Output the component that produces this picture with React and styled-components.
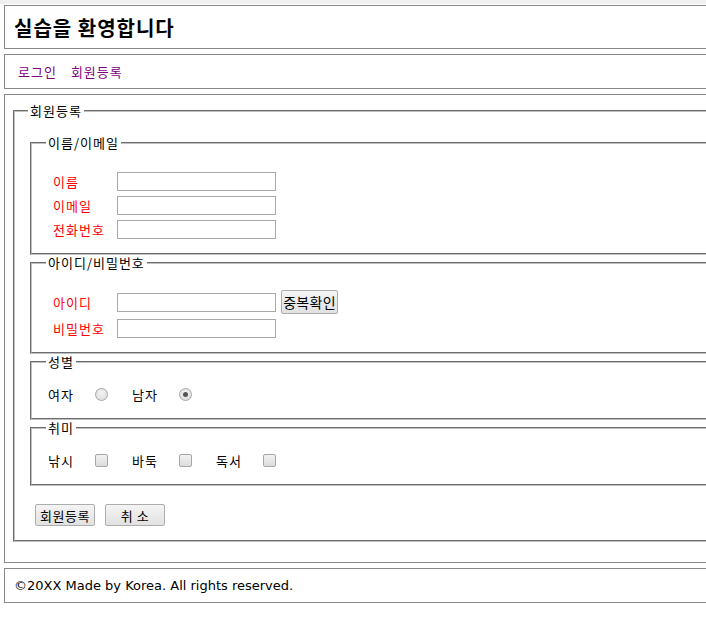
import React from "react";
import styled, { createGlobalStyle } from "styled-components";

const GlobalStyle = createGlobalStyle`
	html, body {
		margin: 0;
		padding: 0;
		background: #ffffff;
		overflow: hidden;
	}
	body {
		font-family: "Noto Sans CJK KR", "Noto Sans", sans-serif;
		font-size: 13px;
		letter-spacing: 1px;
		color: #000000;
	}
`;

const TopStrip = styled.div`
	height: 4px;
	background: #f0f0f0;
`;

const Page = styled.div`
	display: flex;
	flex-direction: column;
	gap: 5px;
	padding: 1px 0 0 4px;
`;

const Box = styled.div`
	width: 760px;
	border: 1px solid #888888;
	box-sizing: border-box;
`;

const Header = styled(Box)`
	height: 44px;
	display: flex;
	align-items: center;
	padding-left: 9px;
`;

const Title = styled.h1`
	margin: 0;
	font-size: 20px;
	font-weight: bold;
	letter-spacing: 1px;
`;

const Nav = styled(Box)`
	height: 35px;
	display: flex;
	align-items: center;
	gap: 14px;
	padding-left: 13px;
`;

const NavLink = styled.a`
	color: #800080;
	text-decoration: none;
	font-size: 13px;
	cursor: pointer;
`;

const Main = styled(Box)`
	padding: 8px 0 20px 8px;
`;

const Fieldset = styled.fieldset`
	margin: 0;
	border: 2px groove #c0c0c0;
	min-width: 0;
`;

const OuterSet = styled(Fieldset)`
	padding: 16px 0 14px 13px;
`;

const Group = styled(Fieldset)`
	margin: 0 2px;
	padding: ${(p) => p.$top}px 0 14px 14px;
`;

const Legend = styled.legend`
	padding: 0 2px;
	font-size: 13px;
	line-height: 16px;
`;

const Rows = styled.div`
	display: flex;
	flex-direction: column;
	gap: 5px;
	margin-left: 7px;
`;

const Row = styled.div`
	display: flex;
	align-items: center;
	min-height: 19px;
`;

const Label = styled.span`
	width: 64px;
	color: #ff0000;
	font-size: 13px;
`;

const TextInput = styled.input`
	width: 159px;
	height: 19px;
	box-sizing: border-box;
	border: 1px solid #a9a9a9;
	padding: 0 2px;
	margin: 0;
	font-size: 13px;
	outline: none;
`;

const Button = styled.button`
	box-sizing: border-box;
	width: ${(p) => p.$w}px;
	height: ${(p) => p.$h}px;
	margin: 0;
	padding: 0;
	border: 1px solid #adadad;
	border-radius: 2px;
	background: linear-gradient(#f4f4f4, #e1e1e1);
	font-family: "Noto Sans CJK KR", sans-serif;
	font-size: ${(p) => p.$size}px;
	letter-spacing: 0.5px;
	white-space: nowrap;
	color: #000000;
`;

const CheckButton = styled(Button)`
	margin-left: 5px;
	letter-spacing: 0.3px;
`;

const Options = styled.div`
	display: flex;
	align-items: center;
	height: 19px;
	margin-left: 2px;
`;

const Option = styled.label`
	display: flex;
	align-items: center;
	margin-right: 24px;
`;

const OptionText = styled.span`
	width: 47px;
	font-size: 13px;
`;

const Radio = styled.input.attrs({ type: "radio" })`
	appearance: none;
	width: 13px;
	height: 13px;
	margin: 0;
	border: 1px solid #a6a6a6;
	border-radius: 50%;
	box-sizing: border-box;
	background: radial-gradient(circle at 50% 40%, #f4f4f4, #d8d8d8);
	position: relative;

	&:checked::after {
		content: "";
		position: absolute;
		left: 3px;
		top: 3px;
		width: 5px;
		height: 5px;
		border-radius: 50%;
		background: #555555;
	}
`;

const Checkbox = styled.input.attrs({ type: "checkbox" })`
	appearance: none;
	width: 13px;
	height: 13px;
	margin: 0;
	border: 1px solid #a6a6a6;
	border-radius: 2px;
	box-sizing: border-box;
	background: linear-gradient(#f2f2f2, #dcdcdc);
`;

const Actions = styled.div`
	display: flex;
	gap: 10px;
	margin: 18px 0 0 7px;
`;

const Footer = styled(Box)`
	height: 35px;
	display: flex;
	align-items: center;
	padding-left: 9px;
	font-family: "DejaVu Sans", sans-serif;
	font-size: 13px;
	letter-spacing: 0;
`;

const nameFields = ["이름", "이메일", "전화번호"];
const hobbies = ["낚시", "바둑", "독서"];

export default function App() {
	return (
		<>
			<GlobalStyle />
			<TopStrip />
			<Page>
				<Header>
					<Title>실습을 환영합니다</Title>
				</Header>
				<Nav>
					<NavLink>로그인</NavLink>
					<NavLink>회원등록</NavLink>
				</Nav>
				<Main>
					<OuterSet>
						<Legend>회원등록</Legend>
						<Group $top={21}>
							<Legend>이름/이메일</Legend>
							<Rows>
								{nameFields.map((f) => (
									<Row key={f}>
										<Label>{f}</Label>
										<TextInput />
									</Row>
								))}
							</Rows>
						</Group>
						<Group $top={19}>
							<Legend>아이디/비밀번호</Legend>
							<Rows>
								<Row>
									<Label>아이디</Label>
									<TextInput />
									<CheckButton $w={57} $h={24} $size={14}>
										중복확인
									</CheckButton>
								</Row>
								<Row>
									<Label>비밀번호</Label>
									<TextInput type="password" />
								</Row>
							</Rows>
						</Group>
						<Group $top={15}>
							<Legend>성별</Legend>
							<Options>
								<Option>
									<OptionText>여자</OptionText>
									<Radio name="gender" />
								</Option>
								<Option>
									<OptionText>남자</OptionText>
									<Radio name="gender" defaultChecked />
								</Option>
							</Options>
						</Group>
						<Group $top={15}>
							<Legend>취미</Legend>
							<Options>
								{hobbies.map((h) => (
									<Option key={h}>
										<OptionText>{h}</OptionText>
										<Checkbox />
									</Option>
								))}
							</Options>
						</Group>
						<Actions>
							<Button $w={60} $h={22} $size={13}>
								회원등록
							</Button>
							<Button $w={60} $h={22} $size={13}>
								취 소
							</Button>
						</Actions>
					</OuterSet>
				</Main>
				<Footer>©20XX Made by Korea. All rights reserved.</Footer>
			</Page>
		</>
	);
}
